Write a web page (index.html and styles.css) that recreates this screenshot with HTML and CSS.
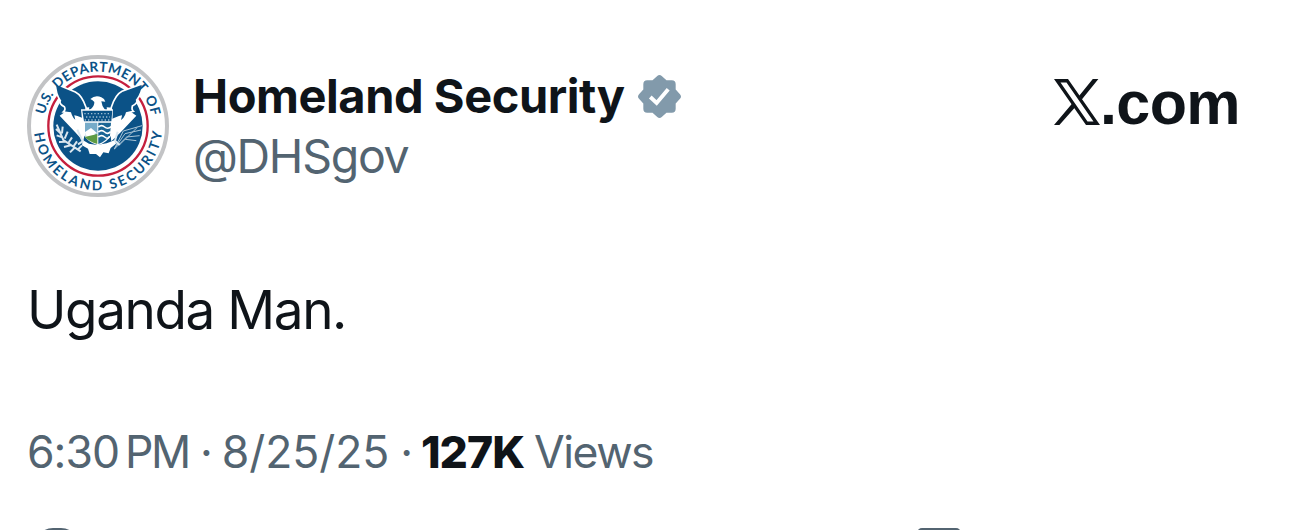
FILE: index.html
```
<!DOCTYPE html>
<html lang="en">
    <head>
        <meta charset="utf-8">
        <title>Homeland Security</title>
        <link rel="stylesheet" href="styles.css">
    </head>
    <body>
        <div class="post">
            <div class="header">
                <svg class="avatar" viewBox="21 21 426 426">
                    <defs>
                        <path id="arc_us" d="M 71 234 A 163 163 0 0 1 397 234"/>
                        <path id="arc_bottom" d="M 41 234 A 193 193 0 0 0 427 234"/>
                    </defs>
                    <circle cx="234" cy="234" r="207" fill="#fff" stroke="#c2c3c5" stroke-width="12"/>
                    <circle cx="234" cy="234" r="149" fill="#fff" stroke="#c51f3d" stroke-width="7"/>
                    <circle cx="234" cy="234" r="134" fill="#0b5287"/>
                    <!-- wings -->
                    <path d="M148 182 L208 178 L190 280 L165 252 L119 203Z M320 182 L260 178 L274 280 L303 252 L349 203Z" fill="#fff"/>
                    <path class="wing" d="M106 107 L166 132 Q186 142 198 178 L200 218 Q176 207 166 205 L170 222 Q155 212 151 195 L130 192 Q138 185 133 176 Q116 167 121 158 Q107 137 106 107Z"/>
                    <path class="wing" d="M368 107 L306 130 Q286 140 274 178 L270 218 Q294 207 303 205 L299 222 Q316 212 320 195 L340 190 Q334 185 337 174 Q354 165 350 156 Q366 137 368 107Z"/>
                    <path d="M211 153 Q226 140 244 148 Q254 152 256 161 L244 160 Q245 174 256 187 L208 187 Q224 176 223 162 Q218 156 211 153Z" fill="#fff"/>
                    <!-- tail and shield -->
                    <path d="M188 276 L207 287 L231 291 L260 286 L285 276 L288 287 L272 300 L266 316 L250 313 L240 328 L228 318 L209 318 L204 302 L186 292Z" fill="#fff"/>
                    <path d="M183 184 H279 L275 260 Q261 284 233 292 Q203 282 191 261Z" fill="#fff"/>
                    <path d="M187 188 H277 L274 220 H192Z" fill="#0b5287"/>
                    <path d="M195 224 H232 V264 L213 251 L195 266Z" fill="#76abc9"/>
                    <path d="M194 267 L232 258 V288 Q207 281 194 267Z" fill="#5e9b43"/>
                    <path d="M195 252 L213 240 L232 256 L196 264Z" fill="#fff"/>
                    <path d="M235 224 H273 L270 262 Q258 280 235 288Z" fill="#1a6595"/>
                    <path class="stars" d="M193 197 H272 M198 207 H270 M194 216 H272"/>
                    <path class="waves" d="M235 237 Q245 229 254 237 T274 236 M235 252 Q245 244 254 252 T272 251 M235 267 Q245 259 254 267 T268 266"/>
                    <!-- olive branch and arrows -->
                    <path class="branch" d="M110 230 L130 276 L182 310 M108 243 L120 254 M110 262 L127 268 M117 282 L136 281 M132 297 L152 292 M150 313 L163 300 M128 236 L126 256 M143 251 L134 272 M156 268 L145 285 M171 280 L160 296 M186 292 L172 306"/>
                    <path class="arrows" d="M366 233 L310 249 L283 303 M363 246 L315 257 L283 303 M359 263 L320 267 L283 303 M349 278 L316 274 M352 238 L299 290"/>
                    <path class="talons" d="M172 245 L188 280 L174 289 M293 251 L285 278 L299 291"/>
                    <g class="seal_text">
                        <text><textPath href="#arc_us" startOffset="34" textLength="68">U.S.</textPath></text>
                        <text><textPath href="#arc_us" startOffset="120" textLength="286">DEPARTMENT</textPath></text>
                        <text><textPath href="#arc_us" startOffset="424" textLength="58">OF</textPath></text>
                        <text><textPath href="#arc_bottom" startOffset="22" textLength="566">HOMELAND SECURITY</textPath></text>
                    </g>
                </svg>
                <div class="names">
                    <div class="name">
                        <span class="display_name">Homeland Security</span>
                        <svg class="badge" viewBox="0 0 42 42">
                            <path d="M18.8 1 Q21 -1 23.2 1 L27.8 5.2 H33 Q36.8 5.2 36.8 9 V14.2 L41 18.8 Q43 21 41 23.2 L36.8 27.8 V33 Q36.8 36.8 33 36.8 H27.8 L23.2 41 Q21 43 18.8 41 L14.2 36.8 H9 Q5.2 36.8 5.2 33 V27.8 L1 23.2 Q-1 21 1 18.8 L5.2 14.2 V9 Q5.2 5.2 9 5.2 H14.2Z" fill="#829aab"/>
                            <path d="M12 21.5 L18.2 27.3 L29.5 14" fill="none" stroke="#fff" stroke-width="3.8"/>
                        </svg>
                    </div>
                    <div class="handle">@DHSgov</div>
                </div>
                <div class="site">
                    <svg class="x_logo" viewBox="0 0 46 46">
                        <path d="M0 0 H14 L46 46 H32Z M6.5 3.6 L33.5 42.4 H39.5 L12.5 3.6Z" fill-rule="evenodd"/>
                        <path d="M38.8 0 H44.4 L27.8 20.5 L25 17Z M0 46 H5.4 L21.8 27.5 L19 23.5Z"/>
                    </svg>
                    <span>.com</span>
                </div>
            </div>
            <div class="message">Uganda Man.</div>
            <div class="details">
                <span class="time">6:30<span class="pm">PM</span></span>
                <span class="dot">·</span>
                <span class="date">8/25/25</span>
                <span class="dot">·</span>
                <span class="count">127K</span>
                <span class="views">Views</span>
            </div>
            <div class="actions">
                <div class="reply"></div>
                <div class="share"></div>
            </div>
        </div>
    </body>
</html>
```
FILE: styles.css
```
body {
    margin: 0;
    background: #fff;
    color: #0f1419;
    font-family: Inter, "Liberation Sans", sans-serif;
    overflow: hidden;
}
.post {
    height: 530px;
    padding: 55px 50px 0 27px;
    box-sizing: border-box;
    overflow: hidden;
}
.header {
    display: flex;
    height: 142px;
}
.avatar {
    width: 142px;
    height: 142px;
}
.seal_text {
    font-family: Lato, "Liberation Sans", sans-serif;
    font-size: 41px;
    font-weight: bold;
    fill: #0b5287;
}
.wing {
    fill: #0b5287;
    stroke: #fff;
    stroke-width: 5;
}
.stars {
    stroke: #9dbdd2;
    stroke-width: 4;
    stroke-dasharray: 4 6;
}
.waves {
    fill: none;
    stroke: #fff;
    stroke-width: 5;
}
.branch, .arrows, .talons {
    fill: none;
    stroke: #dbe7ef;
    stroke-width: 6;
}
.arrows {
    stroke: #a9c4d6;
    stroke-width: 3;
}
.names {
    margin-left: 24px;
    padding-top: 11px;
}
.name {
    display: flex;
    align-items: center;
    height: 60px;
}
.display_name {
    font-size: 47px;
    font-weight: 700;
    letter-spacing: -0.45px;
    line-height: 60px;
    white-space: nowrap;
}
.badge {
    width: 43px;
    height: 43px;
    margin-left: 13px;
}
.handle {
    font-size: 46.5px;
    line-height: 60px;
    letter-spacing: -1.3px;
    color: #536471;
}
.site {
    display: flex;
    margin-left: auto;
    padding-top: 24px;
    height: 46px;
}
.x_logo {
    width: 46px;
    height: 46px;
    fill: #0f1419;
}
.site span {
    font-family: "Liberation Sans", sans-serif;
    font-size: 61px;
    font-weight: bold;
    letter-spacing: -0.6px;
    line-height: 48px;
}
.message {
    margin-top: 78px;
    font-size: 53px;
    line-height: 70px;
    letter-spacing: -1.4px;
}
.details {
    display: flex;
    margin-top: 77px;
    font-size: 44.5px;
    line-height: 60px;
    letter-spacing: -1px;
    color: #536471;
}
.pm {
    margin-left: 6px;
    letter-spacing: -2.3px;
}
.dot {
    margin: 0 10px 0 11px;
}
.date {
    letter-spacing: -0.1px;
}
.count {
    margin-left: -1px;
    font-weight: 800;
    color: #0f1419;
}
.views {
    margin-left: 10px;
    letter-spacing: -1.5px;
}
.actions {
    display: flex;
    justify-content: space-between;
    margin-top: 46px;
    padding: 0 279px 0 8px;
}
.reply, .share {
    width: 44px;
    height: 44px;
    border: 4px solid #536471;
    border-radius: 18px;
    box-sizing: border-box;
}
.share {
    border-radius: 5px;
}
```
